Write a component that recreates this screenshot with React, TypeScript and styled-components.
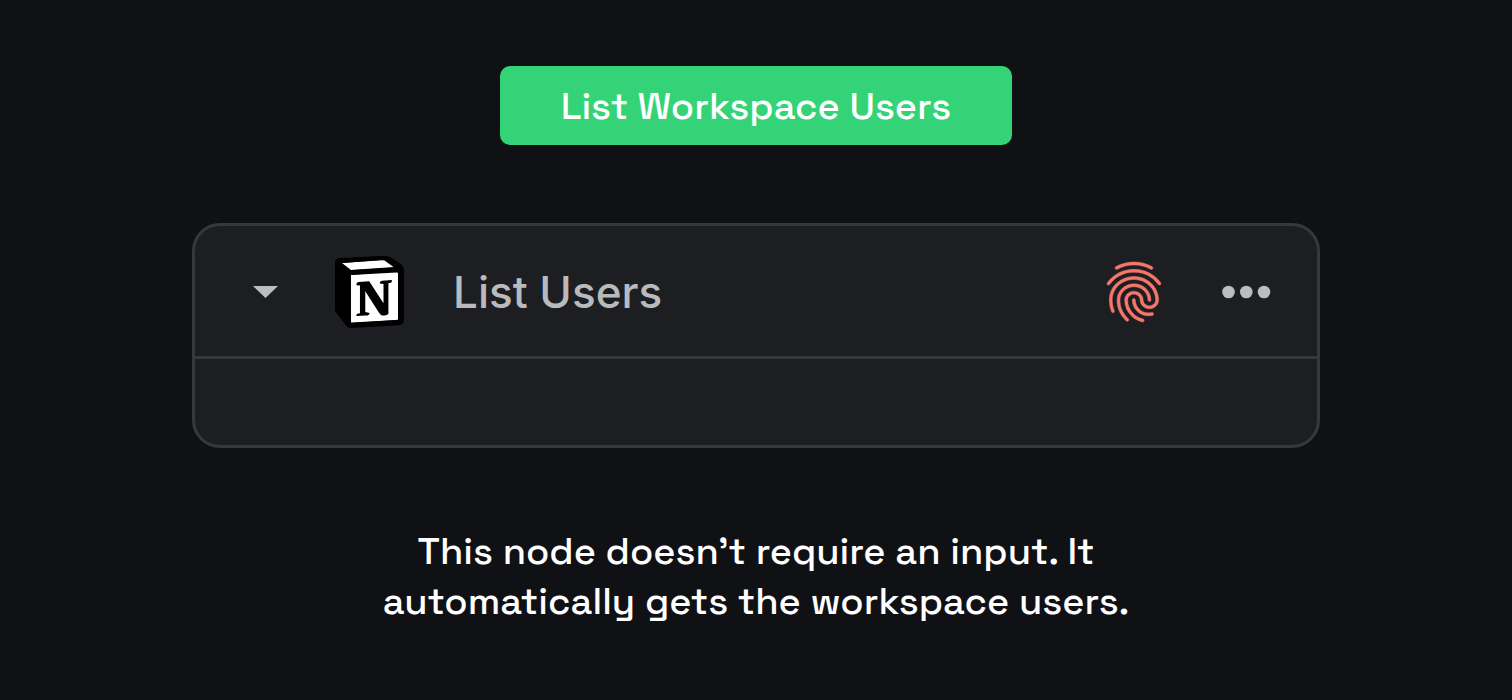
import React from "react";
import styled, { createGlobalStyle } from "styled-components";
import { MdFingerprint } from "react-icons/md";
import { SiNotion } from "react-icons/si";

const GlobalStyle = createGlobalStyle`
  *, *::before, *::after { box-sizing: border-box; }
  body {
    margin: 0;
    background: #101115;
    color: #ffffff;
    font-family: "Space Grotesk", Inter, sans-serif;
  }
`;

const Page = styled.main`
  display: flex;
  flex-direction: column;
  align-items: center;
  gap: 78px;
  min-height: 100vh;
  padding: 66px 192px 72px;
`;

const Title = styled.h1`
  margin: 0;
  min-width: 512px;
  padding: 16px 56px 15px;
  border-radius: 10px;
  background: #35d378;
  font-size: 38px;
  font-weight: 500;
  line-height: 48px;
  text-align: center;
`;

const Card = styled.section`
  width: 100%;
  border: 3px solid #37383b;
  border-radius: 28px;
  background: #1d1e22;
  overflow: hidden;
`;

const CardHeader = styled.header`
  display: flex;
  align-items: center;
  height: 133px;
  padding: 2px 46px 0 56px;
  border-bottom: 3px solid #37383b;
`;

const CardBody = styled.div`
  height: 86px;
`;

const IconButton = styled.button`
  display: flex;
  padding: 0;
  border: 0;
  background: none;
  color: #bcbdbf;
  cursor: pointer;
`;

const Logo = styled.svg`
  flex: none;
  margin: 0 48px 0 56px;
`;

const Fingerprint = styled(MdFingerprint)`
  color: #f5776b;

  path:last-child {
    stroke: currentColor;
    stroke-width: 0.15;
  }
`;

const NodeName = styled.h2`
  flex: 1;
  margin: 0;
  color: #b9babc;
  font-family: Inter, sans-serif;
  font-size: 44px;
  font-weight: 500;
  line-height: 56px;
`;

const Actions = styled.div`
  display: flex;
  align-items: center;
  gap: 52px;
`;

const Caption = styled.p`
  margin: 0;
  max-width: 800px;
  font-size: 38px;
  font-weight: 500;
  line-height: 50px;
  text-align: center;
`;

const NotionLogo = () => (
  <Logo width="70" height="72" viewBox="0 0 70 72" role="img" aria-label="Notion">
    <path
      d="M5 2 50 0q5 0 8 3l9 6q2 2 2 5v49q0 5-5 5l-46 3q-4 0-6-3L2 56q-2-3-2-6V7q0-5 5-5Z"
      fill="#000000"
    />
    <path d="M7 7 50 4l9 7-43 3ZM16 19l47-4v49l-47 3Z" fill="#ffffff" />
    <SiNotion x="-2" y="0" size={72} color="#000000" />
  </Logo>
);

export default function App() {
  return (
    <>
      <GlobalStyle />
      <Page>
        <Title>List Workspace Users</Title>
        <Card>
          <CardHeader>
            <IconButton type="button" aria-label="Collapse node">
              <svg width="28" height="14" viewBox="0 0 28 14">
                <path d="M2 1h25L14.500 13Z" fill="currentColor" />
              </svg>
            </IconButton>
            <NotionLogo />
            <NodeName>List Users</NodeName>
            <Actions>
              <IconButton type="button" aria-label="Credentials">
                <Fingerprint size={72} />
              </IconButton>
              <IconButton type="button" aria-label="More options">
                <svg width="49" height="14" viewBox="0 0 49 14" fill="currentColor">
                  <circle cx="6.500" cy="7" r="6.300" />
                  <circle cx="24.300" cy="7" r="6.300" />
                  <circle cx="42" cy="7" r="6.300" />
                </svg>
              </IconButton>
            </Actions>
          </CardHeader>
          <CardBody />
        </Card>
        <Caption>
          This node doesn’t require an input. It automatically gets the
          workspace users.
        </Caption>
      </Page>
    </>
  );
}
